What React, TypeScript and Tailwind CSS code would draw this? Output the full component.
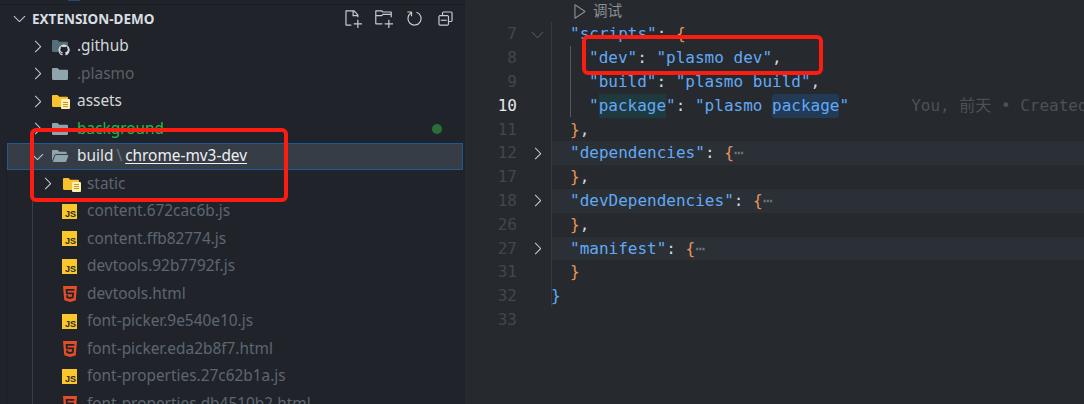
import type { ReactNode } from "react";
import { FaGithub } from "react-icons/fa";
import { SiHtml5 } from "react-icons/si";
import {
    VscChevronDown,
    VscChevronRight,
    VscCollapseAll,
    VscNewFile,
    VscNewFolder,
    VscPlay,
    VscRefresh,
} from "react-icons/vsc";

const sans = { fontFamily: '"Noto Sans", "Noto Sans CJK SC", sans-serif' };

function Folder({ color, open }: { color: string; open?: boolean }) {
    return (
        <svg width="18" height="16" viewBox="0 0 18 16">
            {open ? (
                <path
                    d="M1 3.2C1 2.5 1.500 2 2.200 2h4.300l1.800 1.800h6.200c.7 0 1.200.5 1.200 1.200v1H5.200c-.8 0-1.400.4-1.700 1.100L1 13V3.200zM4.400 7h12c.6 0 1 .6.8 1.200l-1.900 5c-.2.5-.7.8-1.200.8H1.800l2.600-7z"
                    fill={color}
                />
            ) : (
                <path
                    d="M1 3.200C1 2.500 1.500 2 2.200 2h4.300l1.800 1.800h7.500c.7 0 1.200.5 1.200 1.200v7.800c0 .7-.5 1.200-1.200 1.200H2.200C1.500 14 1 13.500 1 12.800V3.200z"
                    fill={color}
                />
            )}
        </svg>
    );
}

function FolderIcon({ kind }: { kind: string }) {
    if (kind === "github") {
        return (
            <div className="relative w-[18px] h-[16px]">
                <Folder color="#546e7a" />
                <FaGithub className="absolute right-[-1px] bottom-[-2px] text-[12px] text-[#cfd8dc] bg-[#20242a] rounded-full" />
            </div>
        );
    }
    if (kind === "assets") {
        return (
            <div className="relative w-[18px] h-[16px]">
                <Folder color="#fbc02d" />
                <div className="absolute right-[-1px] bottom-[0px] w-[9px] h-[10px] bg-[#fff0b8] flex flex-col items-center justify-center gap-[1px] rounded-[1px]">
                    <div className="w-[5px] h-[1px] bg-[#c79a1e]" />
                    <div className="w-[5px] h-[1px] bg-[#c79a1e]" />
                    <div className="w-[5px] h-[1px] bg-[#c79a1e]" />
                </div>
            </div>
        );
    }
    if (kind === "open") return <Folder color="#90a4ae" open />;
    return <Folder color="#90a4ae" />;
}

function JsIcon() {
    return (
        <div
            className="w-[15px] h-[15px] bg-[#f9c62b] flex items-end justify-end pr-[1px] text-[9px] leading-[10px] font-bold text-[#2a2a1e]"
            style={{ fontFamily: '"Liberation Sans", sans-serif' }}
        >
            JS
        </div>
    );
}

type Row = {
    name: string;
    depth: number;
    icon: string;
    arrow?: "right" | "down";
    color: string;
    selected?: boolean;
    dot?: boolean;
};

const dim = "text-[#5e6670]";

const rows: Row[] = [
    { name: ".github", depth: 0, icon: "github", arrow: "right", color: "text-[#d3d7dc]" },
    { name: ".plasmo", depth: 0, icon: "folder", arrow: "right", color: "text-[#5b6066]" },
    { name: "assets", depth: 0, icon: "assets", arrow: "right", color: "text-[#d3d7dc]" },
    { name: "background", depth: 0, icon: "folder", arrow: "right", color: "text-[#22b84a]", dot: true },
    { name: "build", depth: 0, icon: "open", arrow: "down", color: "text-[#e4e8ec]", selected: true },
    { name: "static", depth: 1, icon: "assets", arrow: "right", color: dim },
    { name: "content.672cac6b.js", depth: 1, icon: "js", color: dim },
    { name: "content.ffb82774.js", depth: 1, icon: "js", color: dim },
    { name: "devtools.92b7792f.js", depth: 1, icon: "js", color: dim },
    { name: "devtools.html", depth: 1, icon: "html", color: dim },
    { name: "font-picker.9e540e10.js", depth: 1, icon: "js", color: dim },
    { name: "font-picker.eda2b8f7.html", depth: 1, icon: "html", color: dim },
    { name: "font-properties.27c62b1a.js", depth: 1, icon: "js", color: dim },
    { name: "font-properties.db4510b2.html", depth: 1, icon: "html", color: dim },
];

function TreeRow({ row }: { row: Row }) {
    const shell = row.selected
        ? "h-[27.5px] flex items-center ml-[7px] mr-[2px] border border-[#1d5a96] bg-[#373d46]"
        : "h-[27.5px] flex items-center ml-[7px] mr-[2px] border border-transparent";
    return (
        <div className={shell}>
            <div className={row.depth === 1 ? "w-[54px] shrink-0 pl-[30px]" : "w-[43px] shrink-0 pl-[20px]"}>
                {row.arrow === "right" && <VscChevronRight className="text-[19px] text-[#c5cbd1]" />}
                {row.arrow === "down" && <VscChevronDown className="text-[19px] text-[#c5cbd1]" />}
            </div>
            <div className={row.depth === 1 ? "w-[25px] shrink-0 flex items-center" : "w-[26px] shrink-0 flex items-center"}>
                {row.icon === "js" ? (
                    <JsIcon />
                ) : row.icon === "html" ? (
                    <SiHtml5 className="text-[16px] text-[#e44d26]" />
                ) : (
                    <FolderIcon kind={row.icon} />
                )}
            </div>
            <span className={row.color}>{row.name}</span>
            {row.selected && (
                <>
                    <span className="text-[#6f757c] mx-[3px]">\</span>
                    <span className="text-[#eef0f2] underline underline-offset-2">chrome-mv3-dev</span>
                </>
            )}
            {row.dot && <div className="ml-auto mr-[20px] w-[10px] h-[10px] rounded-full bg-[#2a6e3a]" />}
        </div>
    );
}

function Sidebar() {
    return (
        <div className="relative w-[465px] shrink-0 bg-[#20242a] overflow-hidden text-[15.4px] leading-[22px]" style={sans}>
            <div className="h-[5px] border-b border-[#1a1d22]">
                <div className="ml-[68px] w-[12px] h-[1px] bg-[#1c4f70]" />
            </div>
            <div className="h-[27.5px] flex items-center text-[#d9dde1]">
                <VscChevronDown className="text-[19px] ml-[10px] mr-[3px] text-[#c5cbd1]" />
                <span className="font-bold text-[13.5px]">EXTENSION-DEMO</span>
                <div className="ml-auto mr-[10px] flex items-center gap-[12px] text-[#c5cbd1] text-[19px]">
                    <VscNewFile />
                    <VscNewFolder />
                    <VscRefresh />
                    <VscCollapseAll />
                </div>
            </div>
            {rows.map((r) => (
                <TreeRow key={r.name} row={r} />
            ))}
            {/* tree indent guides */}
            <div className="absolute left-[6px] top-[171px] bottom-0 w-px bg-[#1b1e23]" />
            <div className="absolute left-[32px] top-[171px] bottom-0 w-px bg-[#3a404a]" />
        </div>
    );
}

const str = "text-[#62a9f5]";
const punc = "text-[#d4d8dc]";
const brace = "text-[#e8935a]";

type Line = {
    no: number;
    indent: number;
    fold?: "down" | "right";
    hl?: boolean;
    code: ReactNode;
};

function Obj({ name }: { name: string }) {
    return (
        <>
            <span className={str}>"{name}"</span>
            <span className={punc}>: </span>
            <span className={brace}>{"{"}</span>
            <span className="text-[#6f757c]">⋯</span>
        </>
    );
}

const closing = (
    <>
        <span className={brace}>{"}"}</span>
        <span className={punc}>,</span>
    </>
);

const lines: Line[] = [
    {
        no: 7,
        indent: 1,
        fold: "down",
        code: (
            <>
                <span className={str}>"scripts"</span>
                <span className={punc}>: </span>
                <span className={brace}>{"{"}</span>
            </>
        ),
    },
    {
        no: 8,
        indent: 2,
        code: (
            <>
                <span className={str}>"dev"</span>
                <span className={punc}>: </span>
                <span className={str}>"plasmo dev"</span>
                <span className={punc}>,</span>
            </>
        ),
    },
    {
        no: 9,
        indent: 2,
        code: (
            <>
                <span className={str}>"build"</span>
                <span className={punc}>: </span>
                <span className={str}>"plasmo build"</span>
                <span className={punc}>,</span>
            </>
        ),
    },
    {
        no: 10,
        indent: 2,
        code: (
            <>
                <span className={str}>"</span>
                <span className="text-[#62a9f5] bg-[#1f3a3e] inline-block h-[23.8px]">package</span>
                <span className={str}>"</span>
                <span className={punc}>: </span>
                <span className={str}>"plasmo </span>
                <span className="text-[#62a9f5] bg-[#233a55] rounded-[3px] inline-block h-[23.8px]">package</span>
                <span className={str}>"</span>
                <span className="ml-[62px] text-[#4c5157]">You, 前天 • Created</span>
            </>
        ),
    },
    { no: 11, indent: 1, code: closing },
    { no: 12, indent: 1, fold: "right", hl: true, code: <Obj name="dependencies" /> },
    { no: 17, indent: 1, code: closing },
    { no: 18, indent: 1, fold: "right", hl: true, code: <Obj name="devDependencies" /> },
    { no: 26, indent: 1, code: closing },
    { no: 27, indent: 1, fold: "right", hl: true, code: <Obj name="manifest" /> },
    { no: 31, indent: 1, code: <span className={brace}>{"}"}</span> },
    { no: 32, indent: 0, code: <span className={str}>{"}"}</span> },
    { no: 33, indent: 0, code: null },
];

function CodeLine({ line }: { line: Line }) {
    return (
        <div className="h-[23.8px] flex leading-[23.8px]">
            <div className={line.no === 10 ? "w-[52px] shrink-0 text-right text-[#e6e9ec]" : "w-[52px] shrink-0 text-right text-[#41474e]"}>
                {line.no}
            </div>
            <div className="w-[34px] shrink-0 flex items-center justify-center pl-[6px]">
                {line.fold === "down" && <VscChevronDown className="text-[19px] text-[#4e545b]" />}
                {line.fold === "right" && <VscChevronRight className="text-[19px] text-[#c5cbd1]" />}
            </div>
            <div className={line.hl ? "flex-1 bg-[#2b3036] whitespace-pre" : "flex-1 whitespace-pre"}>
                {line.indent === 1 && <span className="inline-block w-[19px]" />}
                {line.indent === 2 && <span className="inline-block w-[38px]" />}
                {line.code}
            </div>
        </div>
    );
}

function Editor() {
    return (
        <div
            className="relative flex-1 min-w-0 bg-[#262a2f] overflow-hidden text-[16px]"
            style={{ fontFamily: '"DejaVu Sans Mono", "Noto Sans CJK SC", monospace' }}
        >
            <div className="h-[22.4px] flex items-center pl-[106px] text-[14.5px] text-[#8a9097] gap-[4px]" style={sans}>
                <VscPlay className="text-[18px]" />
                <span>调试</span>
            </div>
            {lines.map((l) => (
                <CodeLine key={l.no} line={l} />
            ))}
            {/* indent guides */}
            <div className="absolute left-[86px] top-[22px] h-[285px] w-px bg-[#363b41]" />
            <div className="absolute left-[105px] top-[46px] h-[71px] w-px bg-[#555a60]" />
        </div>
    );
}

export default function App() {
    return (
        <div className="relative w-[1084px] h-[404px] flex overflow-hidden bg-[#262a2f]">
            <Sidebar />
            <Editor />
            {/* hand drawn red annotation boxes */}
            <div className="absolute left-[30px] top-[128px] w-[258px] h-[74px] border-[4px] border-[#fb1c12] rounded-[6px]" />
            <div className="absolute left-[582px] top-[35px] w-[241px] h-[40px] border-[4px] border-[#fb1c12] rounded-[6px]" />
        </div>
    );
}
